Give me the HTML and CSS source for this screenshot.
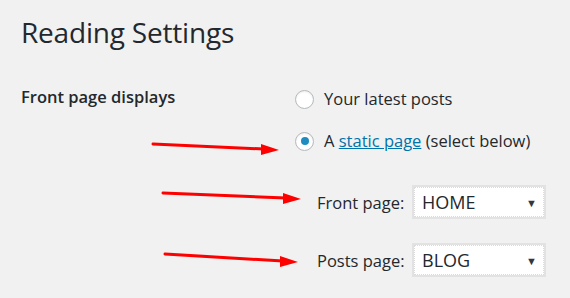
FILE: index.html
```html
<!DOCTYPE html>
<html lang="en">
<head>
    <meta charset="UTF-8">
    <meta name="viewport" content="width=device-width, initial-scale=1.0">
    <title>Reading Settings</title>
    <link rel="stylesheet" href="styles.css">
</head>
<body>
    <div class="wrap">
        <h1>Reading Settings</h1>

        <div class="form-row">
            <div class="row-label">Front page displays</div>
            <div class="row-field">
                <label class="radio-line">
                    <span class="radio"></span>
                    Your latest posts
                </label>
                <label class="radio-line">
                    <span class="radio checked"></span>
                    A&nbsp;<a href="#">static page</a>&nbsp;(select below)
                </label>

                <div class="page-select first">
                    <span class="select-label">Front page:</span>
                    <div class="select-box">HOME <span class="caret">&#9660;</span></div>
                </div>
                <div class="page-select">
                    <span class="select-label">Posts page:</span>
                    <div class="select-box">BLOG <span class="caret">&#9660;</span></div>
                </div>
            </div>
        </div>
    </div>

    <!-- red annotation arrows drawn over the screenshot -->
    <svg class="arrows" width="570" height="298" viewBox="0 0 570 298">
        <g stroke="#ff0000" stroke-width="3" stroke-linecap="round">
            <line x1="153" y1="144" x2="264" y2="149"/>
            <line x1="163" y1="193" x2="286" y2="198"/>
            <line x1="165" y1="254" x2="283" y2="261"/>
        </g>
        <g fill="#ff0000">
            <polygon points="261,144 279,150 261,155"/>
            <polygon points="283,193 301,199 283,204"/>
            <polygon points="280,256 298,262 280,267"/>
        </g>
    </svg>
</body>
</html>
```

FILE: styles.css
```css
html, body { margin: 0; padding: 0; }
body {
    background: #f1f1f1;
    color: #23282d;
    font-family: "Open Sans", "Noto Sans", sans-serif;
    width: 570px;
    height: 298px;
    overflow: hidden;
    position: relative;
}
.wrap { padding: 12px 0 0 21px; }
h1 {
    margin: 0;
    font-size: 28px;
    font-weight: 400;
    line-height: 40px;
    letter-spacing: -0.2px;
}

.form-row { display: flex; margin-top: 36px; }
.row-label {
    width: 274px;
    font-size: 16.5px;
    font-weight: 600;
    line-height: 22px;
    margin-top: -2px;
}
.row-field { display: flex; flex-direction: column; }

.radio-line {
    display: flex;
    align-items: center;
    font-size: 16.5px;
    line-height: 22px;
    height: 22px;
    margin-bottom: 20px;
}
.radio-line a { color: #0073aa; text-decoration: underline; }
.radio {
    width: 17px;
    height: 17px;
    border: 1px solid #b4b9be;
    border-radius: 50%;
    background: #fff;
    margin-right: 10px;
    box-shadow: inset 0 1px 2px rgba(0,0,0,0.07);
    display: flex;
    align-items: center;
    justify-content: center;
}
.radio.checked::before {
    content: "";
    width: 8px;
    height: 8px;
    border-radius: 50%;
    background: #1e8cbe;
}

.page-select {
    display: flex;
    align-items: center;
    margin-left: 22px;
    margin-bottom: 24px;
}
.page-select.first { margin-top: 13px; }
.select-label { font-size: 16.5px; width: 95px; }
.select-box {
    width: 115px;
    height: 30px;
    background: #fff;
    border: 2px solid #e2e2e2;
    outline: 1px dotted #dcdcdc;
    outline-offset: -3px;
    display: flex;
    align-items: center;
    justify-content: space-between;
    padding: 0 7px 0 8px;
    box-sizing: content-box;
    font-size: 18px;
    color: #23282d;
}
.caret { font-size: 11px; color: #32373c; }

.arrows { position: absolute; left: 0; top: 0; pointer-events: none; }
```
